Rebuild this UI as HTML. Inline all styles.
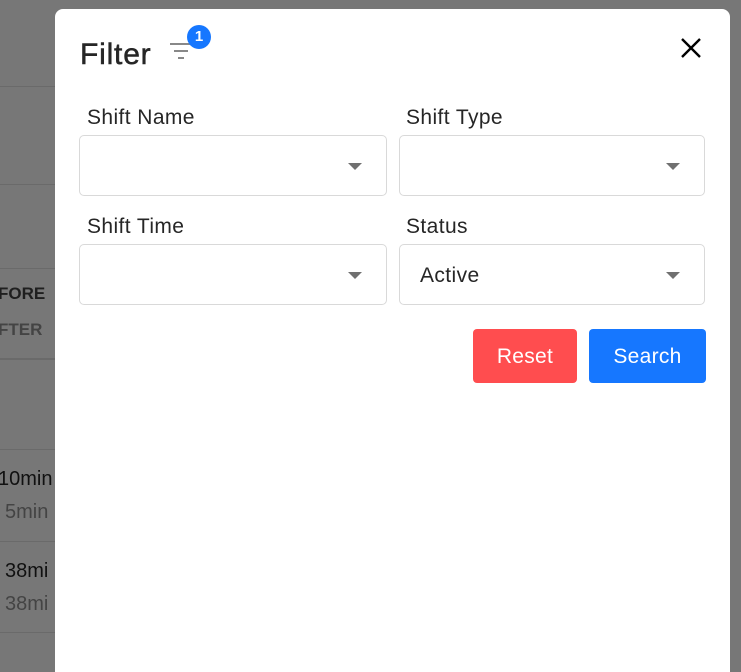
<!DOCTYPE html>
<html><head><style>
html,body{margin:0;width:741px;height:672px;overflow:hidden}
body{background:#777;position:relative;font-family:"Liberation Sans",sans-serif;}
.line{position:absolute;left:0;width:60px;height:1px;background:#6a6a6a}
.bt{position:absolute;font-size:17px;}
.modal{position:absolute;left:55px;top:9px;width:675px;height:663px;background:#fff;border-radius:8px 8px 0 0;}
.lbl{position:absolute;font-size:21px;letter-spacing:0.4px;color:#262626}
.sel{position:absolute;width:308px;height:61px;border:1px solid #d9d9d9;border-radius:5px;box-sizing:border-box}
.sel.r{width:306px}
.sel:after{content:"";position:absolute;right:24px;top:27px;border-left:7px solid transparent;border-right:7px solid transparent;border-top:7px solid #707070}
.btn{position:absolute;top:320px;height:54px;border-radius:4px;color:#fff;font-size:21px;letter-spacing:0.3px;text-align:center;line-height:55px}
</style></head><body>
<div class="line" style="top:86px"></div>
<div class="line" style="top:184px"></div>
<div class="line" style="top:268px"></div>
<div class="line" style="top:358px;height:2px"></div>
<div class="line" style="top:449px"></div>
<div class="line" style="top:541px"></div>
<div class="line" style="top:632px"></div>
<div class="bt" style="left:-2px;top:284px;color:#1f1f1f;font-weight:bold">FORE</div>
<div class="bt" style="left:-2px;top:320px;color:#444;font-weight:bold">FTER</div>
<div class="bt" style="left:-2px;top:468px;font-size:20px;color:#111">10min</div>
<div class="bt" style="left:5px;top:501px;font-size:20px;color:#444">5min</div>
<div class="bt" style="left:5px;top:560px;font-size:20px;color:#111">38mi</div>
<div class="bt" style="left:5px;top:593px;font-size:20px;color:#444">38mi</div>
<div class="modal">
 <div style="position:absolute;left:25px;top:29px;font-size:30px;letter-spacing:0.8px;color:#262626;-webkit-text-stroke:0.5px #262626">Filter</div>
 <svg style="position:absolute;left:114px;top:32px" width="24" height="22"><rect x="1" y="2" width="22" height="2" fill="#888"/><rect x="5" y="9" width="14" height="2" fill="#888"/><rect x="9" y="16" width="6" height="2" fill="#888"/></svg>
 <div style="position:absolute;left:132px;top:16px;width:24px;height:24px;border-radius:50%;background:#1677ff;color:#fff;font-size:15px;font-weight:bold;text-align:center;line-height:24px">1</div>
 <svg style="position:absolute;left:626px;top:29px" width="20" height="20"><path d="M1 1L19 19M19 1L1 19" stroke="#000" stroke-width="2.4"/></svg>
 <div class="lbl" style="left:32px;top:97px">Shift Name</div>
 <div class="lbl" style="left:351px;top:97px">Shift Type</div>
 <div class="sel" style="left:24px;top:126px"></div>
 <div class="sel r" style="left:344px;top:126px"></div>
 <div class="lbl" style="left:32px;top:206px">Shift Time</div>
 <div class="lbl" style="left:351px;top:206px">Status</div>
 <div class="sel" style="left:24px;top:235px"></div>
 <div class="sel r" style="left:344px;top:235px"><span style="position:absolute;left:20px;top:19px;font-size:21px;letter-spacing:0.4px;color:#262626">Active</span></div>
 <div class="btn" style="left:418px;width:104px;background:#ff4d4f">Reset</div>
 <div class="btn" style="left:534px;width:117px;background:#1677ff">Search</div>
</div>
</body></html>
